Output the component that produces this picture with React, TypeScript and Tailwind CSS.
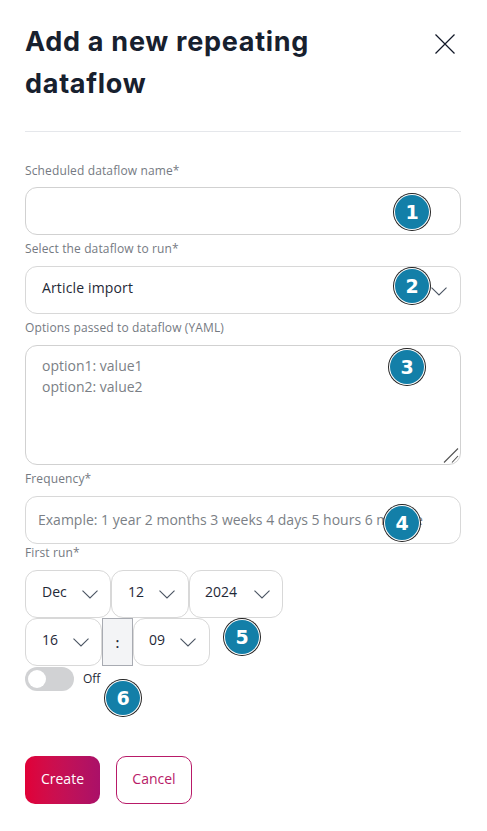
import React, { FC } from "react";

const font = "[font-family:'Open_Sans',sans-serif]";

const Chevron: FC<{ className?: string }> = ({ className }) => (
  <svg width="16" height="9" viewBox="0 0 16 9" fill="none" className={className}>
    <path d="M0.5 0.7 L8 8 L15.5 0.7" stroke="#4b5563" strokeWidth="1.1" />
  </svg>
);

const Label: FC<{ text: string; className?: string }> = ({ text, className }) => (
  <label className={`block text-[12px] leading-[18px] tracking-[0.13px] text-[#757a82] ${className ?? ""}`}>{text}</label>
);

const DateSelect: FC<{ value: string; className: string }> = ({ value, className }) => (
  <div className={`flex h-[48px] items-center justify-between rounded-[12px] border border-[#d8d8d8] bg-white pb-[5px] text-[14px] text-[#1f2937] ${className}`}>
    <span>{value}</span>
    <Chevron className="mt-[6px]" />
  </div>
);

const Badge: FC<{ n: number; className: string }> = ({ n, className }) => (
  <div className={`absolute flex h-[34px] w-[34px] items-center justify-center rounded-full bg-[#137fa8] text-[19px] font-bold text-white shadow-[0_0_0_1px_#fff,0_0_0_2px_#222] [font-family:'DejaVu_Sans',sans-serif] ${className}`}>
    {n}
  </div>
);

export default function App() {
  return (
    <div className={`relative h-[831px] w-[487px] overflow-hidden bg-white pr-[26px] pl-[25px] ${font}`}>
      {/* Header */}
      <div className="flex items-start justify-between pt-[21px]">
        <h2 className="w-[340px] text-[27px] leading-[42px] font-bold tracking-[0.72px] text-[#17202e] [font-family:'Inter',sans-serif]">
          Add a new repeating dataflow
        </h2>
        <svg width="20" height="20" viewBox="0 0 20 20" fill="none" className="mt-[13px] mr-[6px]">
          <path d="M0.5 0.5 L19.5 19.5 M19.5 0.5 L0.5 19.5" stroke="#111827" strokeWidth="1.2" />
        </svg>
      </div>
      <hr className="mt-[26px] border-t border-[#e5e7eb]" />

      {/* Form */}
      <Label text="Scheduled dataflow name*" className="mt-[30px]" />
      <input className="mt-[7px] block h-[48px] w-full rounded-[12px] border border-[#d1d1d1] bg-white px-4 text-[14px] outline-none" />

      <Label text="Select the dataflow to run*" className="mt-[5px]" />
      <div className="mt-[8px] flex h-[48px] items-center justify-between rounded-[12px] border border-[#d8d8d8] bg-white pr-[13px] pb-[5px] pl-[16px] text-[14px] tracking-[0.15px] text-[#1f2937]">
        <span>Article import</span>
        <Chevron className="mt-[7px]" />
      </div>

      <Label text="Options passed to dataflow (YAML)" className="mt-[5px]" />
      <div className="relative mt-[8px]">
        <textarea
          placeholder={"option1: value1\noption2: value2"}
          className="block h-[120px] w-full resize-none rounded-[12px] border border-[#d1d1d1] bg-white px-[16px] py-[9px] text-[14px] leading-[21px] outline-none placeholder:text-[#7b7f86]"
        />
        {/* resize handle */}
        <svg width="16" height="15" viewBox="0 0 16 15" fill="none" className="absolute right-[2px] bottom-[2px]">
          <path d="M1 14.5 L15 0.5 M9 14.5 L15 8" stroke="#555" strokeWidth="1.1" />
        </svg>
      </div>

      <Label text="Frequency*" className="mt-[5px]" />
      <input
        placeholder="Example: 1 year 2 months 3 weeks 4 days 5 hours 6 minute"
        className="mt-[8px] block h-[48px] w-full rounded-[12px] border border-[#d8d8d8] bg-white px-[12px] pb-[2px] text-[14px] outline-none placeholder:text-[#7b7f86]"
      />

      <Label text="First run*" className="mt-0" />
      <div className="mt-[8px] flex">
        <DateSelect value="Dec" className="w-[86px] pr-[12px] pl-[16px]" />
        <DateSelect value="12" className="w-[78px] pr-[13px] pl-[16px]" />
        <DateSelect value="2024" className="w-[94px] pr-[12px] pl-[15px]" />
      </div>
      <div className="flex">
        <DateSelect value="16" className="w-[77px] pr-[12px] pl-[16px]" />
        <div className="flex h-[48px] w-[31px] items-center justify-center border border-[#a8abb2] bg-[#f3f4f6] text-[14px] font-semibold text-[#1f2937]">
          :
        </div>
        <DateSelect value="09" className="w-[77px] pr-[13px] pl-[15px]" />
      </div>

      {/* Toggle */}
      <div className="mt-[1px] flex items-start">
        <div className="flex h-[24px] w-[49px] items-center rounded-full bg-[#d1d2d4] pl-[3px]">
          <div className="h-[18px] w-[18px] rounded-full bg-white" />
        </div>
        <span className="ml-[9px] pt-[1px] text-[12px] leading-[22px] text-[#1f2937]">Off</span>
      </div>

      {/* Buttons */}
      <div className="mt-[65px] flex gap-[16px]">
        <button className="h-[48px] w-[75px] rounded-[10px] bg-gradient-to-r from-[#e10037] to-[#aa1068] pb-[3px] text-[14px] text-white">
          Create
        </button>
        <button className="h-[48px] w-[76px] rounded-[10px] border border-[#b81a68] bg-white pb-[3px] text-[14px] text-[#b81a68]">
          Cancel
        </button>
      </div>

      {/* Numbered callouts */}
      <Badge n={1} className="top-[195px] left-[395px]" />
      <Badge n={2} className="top-[269px] left-[395px]" />
      <Badge n={3} className="top-[350px] left-[390px]" />
      <Badge n={4} className="top-[506px] left-[385px]" />
      <Badge n={5} className="top-[620px] left-[225px]" />
      <Badge n={6} className="top-[681px] left-[106px]" />
    </div>
  );
}
